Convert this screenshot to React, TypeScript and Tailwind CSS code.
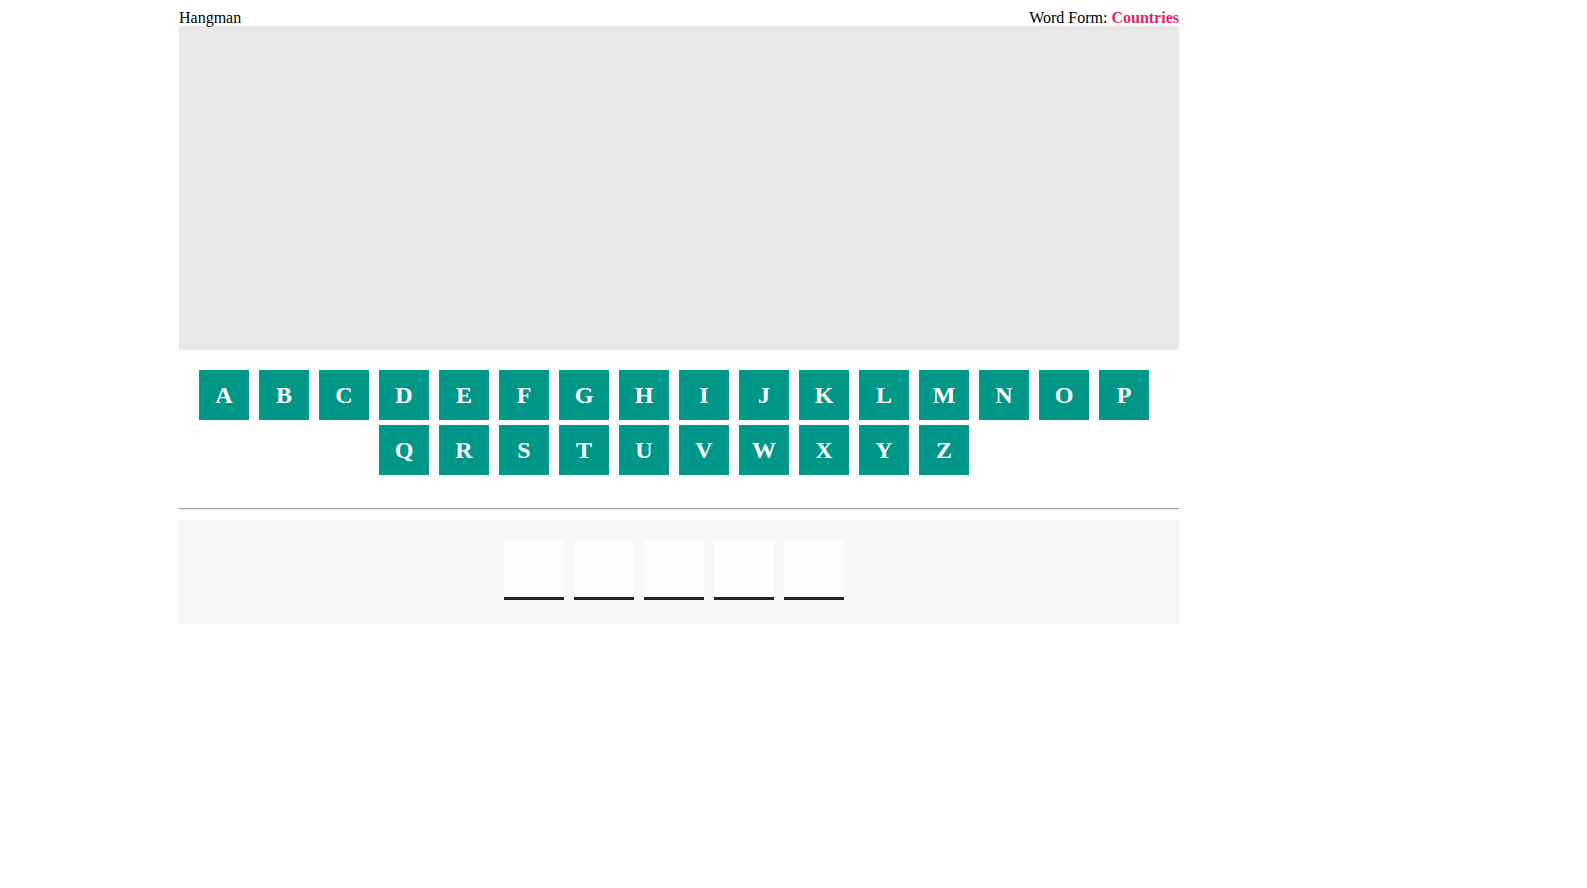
const LETTERS = "ABCDEFGHIJKLMNOPQRSTUVWXYZ".split("");
const SLOTS = 5;

export default function App() {
  return (
    <div className="min-h-screen bg-white font-['Liberation_Serif',serif] text-black">
      <div className="ml-[179px] w-[1000px]">
        {/* header */}
        <div className="flex h-[26px] items-end justify-between text-[16px] leading-[18px]">
          <span className="translate-y-[1px]">Hangman</span>
          <span className="translate-y-[1px]">
            Word Form: <b className="text-[#e91e63]">Countries</b>
          </span>
        </div>

        {/* drawing area */}
        <div className="h-[324px] bg-[#e8e8e8]" />

        {/* keyboard */}
        <div className="flex flex-wrap justify-center gap-y-[5px] pt-[20px]">
          {LETTERS.map((l) => (
            <button
              key={l}
              className="mr-[10px] flex h-[50px] w-[50px] cursor-pointer items-center justify-center bg-[#009688] text-[24px] font-bold text-white"
            >
              {l}
            </button>
          ))}
        </div>

        <div className="mt-[33px] border-t border-b border-t-[#9a9a9a] border-b-[#eeeeee]" />

        {/* word */}
        <div className="mt-[10px] flex justify-center bg-[#f7f7f7] pt-[20px] pb-[24px]">
          {Array.from({ length: SLOTS }).map((_, i) => (
            <div
              key={i}
              className="mr-[10px] h-[60px] w-[60px] border-b-[3px] border-[#222222] bg-[#fcfcfc]"
            />
          ))}
        </div>
      </div>
    </div>
  );
}
